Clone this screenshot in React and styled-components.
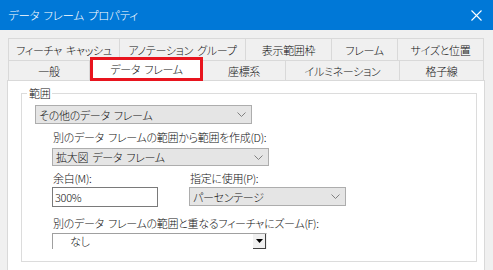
import styled, { createGlobalStyle } from "styled-components";

const GlobalStyle = createGlobalStyle`
  html, body {
    margin: 0;
    padding: 0;
    background: #f0f0f0;
  }
  body {
    font-family: "Noto Sans CJK JP", "Noto Sans", sans-serif;
    font-size: 11px;
    font-weight: 300;
    letter-spacing: -0.3px;
    word-spacing: 2px;
    font-feature-settings: "palt";
    color: #111;
  }
`;

const Window = styled.div`
  width: 493px;
  height: 270px;
  overflow: hidden;
  display: flex;
  flex-direction: column;
  background: #f0f0f0;
`;

const TitleBar = styled.div`
  height: 30px;
  flex-shrink: 0;
  background: #0078d7;
  display: flex;
  align-items: center;
  justify-content: space-between;
  padding: 0 11px 0 8px;
  color: #fff;
`;

const Title = styled.span`
  font-size: 11.5px;
  line-height: 16px;
`;

const Body = styled.div`
  padding: 8px 8px 0 7px;
  display: flex;
  flex-direction: column;
`;

const TabRow = styled.div`
  display: flex;
  margin-left: 1px;
  height: ${(p) => p.$h}px;
  position: relative;
  z-index: ${(p) => (p.$front ? 2 : 1)};
`;

const Tab = styled.div`
  width: ${(p) => p.$w}px;
  box-sizing: border-box;
  display: flex;
  align-items: center;
  justify-content: center;
  border: 1px solid #d9d9d9;
  border-left-width: ${(p) => (p.$first ? 1 : 0)}px;
  border-bottom-width: 0;
  background: #f0f0f0;
  line-height: 16px;
  white-space: nowrap;
`;

const ActiveTab = styled.div`
  width: ${(p) => p.$w}px;
  box-sizing: border-box;
  margin-top: -3px;
  height: 24px;
  display: flex;
  align-items: center;
  justify-content: center;
  background: #fff;
  border: 3px solid #e8141e;
  line-height: 16px;
  white-space: nowrap;
`;

const Panel = styled.div`
  width: 478px;
  height: 200px;
  box-sizing: border-box;
  background: #fff;
  border: 1px solid #d9d9d9;
  padding: 4px 7px 0 13px;
`;

const Group = styled.fieldset`
  margin: 0;
  padding: 0 0 12px 0;
  border: 1px solid #dcdcdc;
  height: 177px;
  box-sizing: border-box;
  display: flex;
  flex-direction: column;
`;

const Legend = styled.legend`
  margin-left: 5px;
  padding: 0 2px;
  line-height: 16px;
`;

const Select = styled.div`
  width: ${(p) => p.$w}px;
  height: ${(p) => p.$h}px;
  box-sizing: border-box;
  margin-left: ${(p) => p.$ml || 0}px;
  margin-top: ${(p) => p.$mt || 0}px;
  background: #e5e5e5;
  border: 1px solid #adadad;
  display: flex;
  align-items: center;
  justify-content: space-between;
  padding: 0 5px 0 3px;
  line-height: 16px;
  white-space: nowrap;
`;

const Label = styled.div`
  margin-left: ${(p) => p.$ml || 0}px;
  margin-top: ${(p) => p.$mt || 0}px;
  line-height: 16px;
  white-space: nowrap;
`;

const Inner = styled.div`
  margin-left: 30px;
  display: flex;
  flex-direction: column;
`;

const Grid = styled.div`
  display: grid;
  grid-template-columns: 137px 157px;
  row-gap: 1px;
  margin-top: 4px;
`;

const TextInput = styled.div`
  width: 106px;
  height: 20px;
  box-sizing: border-box;
  border: 1px solid #7a7a7a;
  background: #fff;
  padding: 0 2px;
  line-height: 18px;
`;

const Combo = styled.div`
  width: 215px;
  height: 16px;
  box-sizing: border-box;
  margin-top: 2px;
  display: flex;
  border-top: 1px solid #a0a0a0;
  border-left: 1px solid #a0a0a0;
  border-right: 1px solid #f0f0f0;
  background: #fff;
`;

const ComboText = styled.div`
  flex: 1;
  padding-left: 17px;
  line-height: 15px;
`;

const ComboButton = styled.div`
  width: 13px;
  background: #f0f0f0;
  border-bottom: 1px solid #404040;
  border-right: 1px solid #404040;
  box-sizing: border-box;
  display: flex;
  align-items: center;
  justify-content: center;
`;

const Chevron = () => (
  <svg width="9" height="5" viewBox="0 0 9 5">
    <path d="M0.5 0.5 L4.5 4.5 L8.5 0.5" fill="none" stroke="#808080" strokeWidth="1" />
  </svg>
);

const row1 = [
  ["フィーチャ キャッシュ", 112],
  ["アノテーション グループ", 126],
  ["表示範囲枠", 86],
  ["フレーム", 66],
  ["サイズと位置", 86],
];

const App = () => {
  return (
    <>
      <GlobalStyle />
      <Window>
        <TitleBar>
          <Title>データ フレーム プロパティ</Title>
          <svg width="11" height="11" viewBox="0 0 11 11">
            <path d="M0.5 0.5 L10.5 10.5 M10.5 0.5 L0.5 10.5" stroke="#fff" strokeWidth="1.1" />
          </svg>
        </TitleBar>
        <Body>
          <TabRow $h={22}>
            {row1.map(([t, w], i) => (
              <Tab key={t} $w={w} $first={i === 0}>
                {t}
              </Tab>
            ))}
          </TabRow>
          <TabRow $h={20} $front>
            <Tab $w={82} $first>一般</Tab>
            <ActiveTab $w={113}>データ フレーム</ActiveTab>
            <Tab $w={83}>座標系</Tab>
            <Tab $w={114}>イルミネーション</Tab>
            <Tab $w={84}>格子線</Tab>
          </TabRow>
          <Panel>
            <Group>
              <Legend>範囲</Legend>
              <Select $w={217} $h={19} $ml={13} $mt={4}>
                その他のデータ フレーム
                <Chevron />
              </Select>
              <Inner>
                <Label $ml={1} $mt={5}>別のデータ フレームの範囲から範囲を作成(D):</Label>
                <Select $w={217} $h={18} $mt={3}>
                  拡大図 データ フレーム
                  <Chevron />
                </Select>
                <Grid>
                  <Label $ml={1}>余白(M):</Label>
                  <Label $ml={1}>指定に使用(P):</Label>
                  <TextInput>300%</TextInput>
                  <Select $w={157} $h={19}>
                    パーセンテージ
                    <Chevron />
                  </Select>
                </Grid>
                <Label $ml={1} $mt={8}>別のデータ フレームの範囲と重なるフィーチャにズーム(F):</Label>
                <Combo>
                  <ComboText>なし</ComboText>
                  <ComboButton>
                    <svg width="7" height="4" viewBox="0 0 7 4">
                      <path d="M0 0 L7 0 L3.5 4 Z" fill="#000" />
                    </svg>
                  </ComboButton>
                </Combo>
              </Inner>
            </Group>
          </Panel>
        </Body>
      </Window>
    </>
  );
};

export default App;
